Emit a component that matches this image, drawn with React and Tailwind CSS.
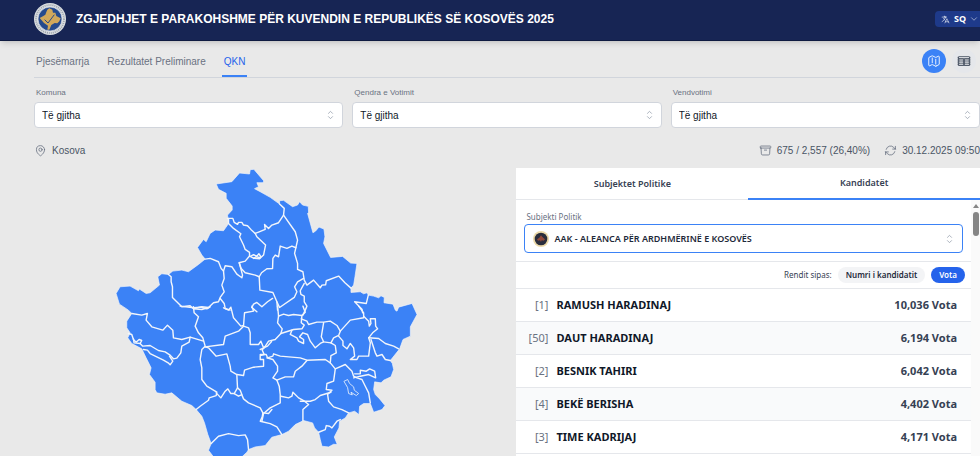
import { useState } from 'react';
import {
  HiOutlineArchiveBox,
  HiOutlineArrowPath,
  HiOutlineChevronDown,
  HiOutlineChevronUpDown,
  HiOutlineLanguage,
  HiOutlineMap,
  HiOutlineMapPin,
  HiOutlineTableCells
} from 'react-icons/hi2';

const tabs = ['Pjesëmarrja', 'Rezultatet Preliminare', 'QKN'];

const filters = [
  { id: 'komuna', label: 'Komuna' },
  { id: 'qendra', label: 'Qendra e Votimit' },
  { id: 'vendvotimi', label: 'Vendvotimi' }
];

const candidates = [
  { number: 1, name: 'RAMUSH HARADINAJ', votes: '10,036' },
  { number: 50, name: 'DAUT HARADINAJ', votes: '6,194' },
  { number: 2, name: 'BESNIK TAHIRI', votes: '6,042' },
  { number: 4, name: 'BEKË BERISHA', votes: '4,402' },
  { number: 3, name: 'TIME KADRIJAJ', votes: '4,171' }
];

const countryOutline =
  'M318 72 L365 65 388 39 418 42 420 29 431 28 461 63 458 68 440 68 445 80 433 86 450 95 480 112 508 132 508 122 520 121 547 140 562 135 568 125 577 135 594 139 595 157 592 160 608 218 616 213 626 201 641 207 644 230 640 250 661 292 697 289 721 309 740 310 734 350 730 375 722 384 722 397 750 395 760 401 770 398 774 405 790 408 805 413 812 407 822 412 821 428 848 432 855 450 860 453 865 441 905 430 920 463 900 500 900 528 878 538 868 566 840 601 846 610 850 628 842 650 820 660 812 668 793 665 790 688 795 703 808 716 824 736 815 748 790 756 780 730 760 730 748 738 746 763 733 753 715 758 705 773 688 783 686 803 672 830 681 853 670 852 655 860 635 858 630 838 625 816 613 803 607 788 580 781 555 793 535 813 515 823 485 831 465 856 435 860 415 868 410 876 395 890 310 890 295 870 303 850 293 823 283 788 275 768 258 748 245 736 215 723 185 698 165 702 140 698 135 688 135 666 118 643 123 623 108 593 95 566 65 550 53 533 60 518 50 503 50 483 65 460 55 450 28 432 18 400 30 380 60 378 85 392 88 387 108 400 120 398 148 375 143 350 155 341 175 343 188 333 215 330 235 335 265 313 285 297 275 285 262 262 280 238 288 245 300 220 315 210 340 212 352 195 355 190 352 165 366 150 366 138 348 115 348 100 325 88Z';

const northBorders = [
  'M352 175 368 175 372 187 382 193 385 187 395 187 400 195 412 197 422 208 435 220 445 216 465 208 463 193 475 205 485 195 505 188 520 165 522 145 508 132',
  'M355 175 355 190 370 205 392 221 388 230 400 255 405 268 418 277 418 288 432 295 448 296 460 285 466 255 440 230 435 220',
  'M422 288 430 284 440 288 446 281 452 290 M430 295 438 290 450 293',
  'M418 288 405 303 387 308 393 325 405 338 435 345 447 350',
  'M285 297 300 295 325 305 333 325 340 333 345 317 365 320 380 342 395 353 397 345 393 330 387 308',
  'M340 333 342 355 335 375 342 395 330 412 325 425 310 428 295 442 275 440 250 446 240 437 215 440 187 412 187 380 183 365 183 350 175 343',
  'M330 415 342 430 345 445 360 450',
  'M447 350 454 338 470 326 487 325 488 295 495 285 505 290 510 258 530 265 545 258 557 263',
  'M447 350 449 390 488 397 500 425 508 442 552 412 560 395 553 380 562 365 580 355',
  'M425 442 430 432 440 427 455 440 472 425 487 415',
  'M520 165 555 215 562 240 553 280 562 310 562 328 578 335 582 360 590 375 610 360 630 383 635 375 646 374 648 362 685 348 704 368 722 384',
  'M582 370 570 392 572 403 582 408 582 425 590 438 585 450 578 465',
  'M774 405 768 430 733 425 755 447 757 458',
  'M500 425 502 450',
  'M425 442 440 455',
  'M250 446 275 448 295 442'
];

const southWestBorders = [
  'M65 22 95 27 112 22 108 42 125 62 158 72 172 57 188 72 190 95 215 100 240 93 280 105',
  'M240 93 237 108 215 120 212 140 200 156 190 158 180 147 165 137 145 133 120 118 98 120 90 112 95 103 87 100 78 108 70 100 65 85 55 82',
  'M70 98 72 110 90 112',
  'M100 130 112 132 120 142 160 162 174 170 180 176 188 165 178 150',
  'M250 2 252 20 265 32 255 60 265 80 278 95 285 120 275 130 270 160 275 185 275 220 290 240 320 258 318 268 297 275 295 282 270 300 258 310',
  'M285 122 340 115 345 90 385 75 400 60 415 65 420 80 420 115 445 115 452 105 460 125 472 120 484 106',
  'M285 122 295 125 318 150 350 143 360 180 362 195 380 205 400 208 403 192 430 183 460 180 460 160 450 160 450 148 462 145 456 132 462 122',
  'M210 0 250 5 270 3 290 8 300 2',
  'M340 5 355 12 362 3 370 35 392 60 400 58 403 20 430 15 425 0',
  'M380 208 382 245 372 262 362 262 353 248 345 255 332 275 318 260',
  'M372 262 385 270 395 265 390 252 382 245',
  'M395 266 400 278 415 290 450 305 458 320 475 322 485 310',
  'M458 320 456 332 450 345 480 352 500 362 515 385',
  'M303 412 325 390 355 382 385 388 405 386 412 400 415 430'
];

const southEastBorders = [
  'M52 0 55 30 52 50 66 68 62 82 45 100 25 105 12 125 0 130',
  'M55 30 70 24 85 28 100 25 125 28 135 18 128 0',
  'M125 28 123 50 132 57 125 68 100 70 62 82',
  'M123 38 140 45 145 55 170 48 190 48 210 45 230 58 240 75 235 88 220 95 212 110 190 107 183 92 190 50',
  'M95 72 90 85 110 95 115 105 130 112 130 100 118 92 128 80 142 85 150 105 165 125 180 112 190 107',
  'M212 110 225 118 228 140 212 148 210 170',
  'M240 75 270 42 310 35 310 20 295 0',
  'M310 30 325 45 327 60 332 52 330 38 345 38 346 60 352 68 337 80 325 95 330 110 325 150 295 150 290 160 270 160 283 150 280 125 270 112 260 128 248 118 248 105 235 90',
  'M325 95 355 97 375 112 400 120 415 128',
  'M332 100 345 140 350 150 365 145 375 160 390 163',
  'M0 145 18 145 22 155 38 150 40 143 60 150 120 155 140 162 195 160 210 170 225 188 220 225 200 232 198 250 215 252 202 265 205 285 220 302 245 310 265 320',
  'M20 155 38 160 52 180 52 195 38 215 50 222 57 240 60 265 60 290 30 305 10 322 5 345',
  'M50 222 75 212 100 212 105 195 125 180 140 163',
  'M62 270 85 275 95 270 98 258 115 275 130 283 145 295 128 310 128 343',
  'M120 285 150 285 165 280 180 268 212 258',
  'M225 188 255 175 275 195 280 210 290 215 305 220 315 240 325 260 330 290',
  'M283 203 300 203 300 192 318 195 328 188 343 195 346 215 325 205 300 210 280 215',
  'M175 378 195 370 198 358 208 360 215 365 230 345 240 340'
];

// lake-like enclave in the south-east
const enclave = 'M252 225 262 220 268 232 280 242 282 252 295 262 288 268 272 258 276 266 265 262 262 245Z';

function KosovoMap() {
  return (
    <svg viewBox="-228 24 1446 864" className="block w-full" role="img" aria-label="Harta e Kosovës">
      <path d={countryOutline} fill="#3b82f6" stroke="#f1f5fb" strokeWidth="2" strokeLinejoin="round" />
      <g fill="none" stroke="#f3f6fb" strokeWidth="4.2" strokeLinejoin="round" strokeLinecap="round">
        {northBorders.map((d) => (
          <path key={d} d={d} />
        ))}
        <g transform="translate(0 438)">
          {southWestBorders.map((d) => (
            <path key={d} d={d} />
          ))}
        </g>
        <g transform="translate(450 438)">
          {southEastBorders.map((d) => (
            <path key={d} d={d} />
          ))}
          <path d={enclave} strokeWidth="2.4" />
        </g>
      </g>
    </svg>
  );
}

function Emblem() {
  return (
    <svg viewBox="0 0 96 96" className="size-8 shrink-0" aria-hidden="true">
      <circle cx="48" cy="48" r="48" fill="#d9dde0" />
      <circle cx="48" cy="48" r="42" fill="none" stroke="#9aa2ab" strokeWidth="5" strokeDasharray="3 3" />
      <circle cx="48" cy="48" r="36" fill="#254a8d" stroke="#e5e7eb" strokeWidth="2" />
      <path
        d="M37 27 L40 20 46 16 55 20 57 29 64 29 67 39 80 46 76 55 70 61 62 60 52 66 46 80 40 80 42 68 30 60 17 45 28 39 34 35Z"
        fill="#d1a85b"
      />
      <path d="M32 50 L42 60 61 35" fill="none" stroke="#254a8d" strokeWidth="3" />
    </svg>
  );
}

function PartyLogo() {
  return (
    <svg viewBox="0 0 48 48" className="size-4" aria-hidden="true">
      <circle cx="24" cy="24" r="24" fill="#ecd9a8" />
      <circle cx="24" cy="24" r="19" fill="#2a2e3d" />
      <path d="M24 13 L29 19 36 25 32 29 26 28 24 33 21 28 15 29 12 25 19 20Z" fill="#934a3b" />
    </svg>
  );
}

function Header() {
  return (
    <header className="flex h-[41px] shrink-0 items-center justify-between border-b border-[#0e1a40] bg-[#172554] pb-0.5 pl-[34px] shadow-md">
      <div className="flex items-center gap-2.5">
        <Emblem />
        <h1 className="text-[12px] font-bold whitespace-nowrap text-white">
          ZGJEDHJET E PARAKOHSHME PËR KUVENDIN E REPUBLIKËS SË KOSOVËS 2025
        </h1>
      </div>
      <button
        type="button"
        className="-mr-1 flex h-4 items-center gap-1 rounded bg-[#1e3a8a] px-1.5 font-['Noto_Sans',sans-serif] text-[9px] font-bold text-white"
      >
        <HiOutlineLanguage size={9} />
        SQ
        <HiOutlineChevronDown size={8} />
      </button>
    </header>
  );
}

function Filter({ id, label }) {
  return (
    <div className="min-w-0 flex-1">
      <label htmlFor={id} className="block px-0.5 text-[8px] leading-[18px] text-gray-500">
        {label}
      </label>
      <div className="relative">
        <select
          id={id}
          className="block h-[26px] w-full appearance-none rounded border border-gray-300 bg-white px-[7px] text-[10px] text-gray-900"
        >
          <option>Të gjitha</option>
        </select>
        <HiOutlineChevronUpDown
          size={13}
          className="pointer-events-none absolute top-1/2 right-1.5 -translate-y-1/2 text-gray-400"
        />
      </div>
    </div>
  );
}

function CandidatePanel() {
  const [sort, setSort] = useState('votes');

  return (
    <section className="flex min-w-0 flex-col bg-white font-['Noto_Sans',sans-serif]">
      <div className="flex h-8 shrink-0 text-[9px] font-semibold text-gray-700">
        <button type="button" className="flex-1 border-b border-gray-200">
          Subjektet Politike
        </button>
        <button type="button" className="flex-1 border-b-2 border-[#3b82f6]">
          Kandidatët
        </button>
      </div>

      <div className="flex min-h-0 flex-1">
        <div className="min-w-0 flex-1">
          <div className="border-b border-gray-200 px-2 pt-2.5 pb-2">
            <label htmlFor="party" className="block px-0.5 text-[8px] leading-[14px] text-gray-500">
              Subjekti Politik
            </label>
            <div className="relative">
              <select
                id="party"
                className="block h-[29px] w-full appearance-none rounded border border-[#3b82f6] bg-white pr-6 pl-[29px] text-[9px] font-semibold text-gray-800"
              >
                <option>AAK - ALEANCA PËR ARDHMËRINË E KOSOVËS</option>
              </select>
              <span className="pointer-events-none absolute top-1/2 left-[9px] -translate-y-1/2">
                <PartyLogo />
              </span>
              <HiOutlineChevronUpDown
                size={13}
                className="pointer-events-none absolute top-1/2 right-[7px] -translate-y-1/2 text-gray-400"
              />
            </div>
          </div>

          <div className="flex h-[27px] items-center justify-end gap-1.5 border-b border-gray-200 pr-1.5 text-[8px] font-semibold text-gray-800">
            <span className="font-normal text-gray-700">Rendit sipas:</span>
            <button
              type="button"
              className="h-4 rounded-full bg-gray-100 px-2"
              aria-pressed={sort === 'number'}
              onClick={() => setSort('number')}
            >
              Numri i kandidatit
            </button>
            <button
              type="button"
              className="h-4 rounded-full bg-[#2563eb] px-2 text-white"
              aria-pressed={sort === 'votes'}
              onClick={() => setSort('votes')}
            >
              Vota
            </button>
          </div>

          <ul>
            {candidates.map((candidate) => (
              <li
                key={candidate.number}
                className="flex h-[33px] items-center gap-2 border-b border-gray-200 pt-px pr-3.5 pl-3 text-[11px] font-bold even:bg-gray-50"
              >
                <span className="w-5 text-right font-normal text-gray-500">[{candidate.number}]</span>
                <span className="flex-1 text-gray-900">{candidate.name}</span>
                <span className="text-gray-700">{candidate.votes} Vota</span>
              </li>
            ))}
          </ul>
        </div>

        <div className="flex w-[9px] shrink-0 flex-col items-center bg-[#fafafa] pt-1" aria-hidden="true">
          <svg viewBox="0 0 6 4" className="h-1 w-1.5">
            <path d="M3 0 L6 4 H0Z" fill="#858585" />
          </svg>
          <div className="mt-1 h-6 w-1.5 rounded-full bg-[#858585]" />
        </div>
      </div>
    </section>
  );
}

function App() {
  const [activeTab, setActiveTab] = useState('QKN');

  return (
    <div className="flex h-screen flex-col overflow-hidden bg-[#e9e9e9] font-['Liberation_Sans',Arial,sans-serif]">
      <Header />

      <main className="flex min-h-0 flex-1 flex-col pl-[34px]">
        <div className="flex h-[37px] shrink-0 items-stretch justify-between border-b border-gray-300">
          <nav className="flex gap-3.5 text-[10px]">
            {tabs.map((tab) => (
              <button
                key={tab}
                type="button"
                onClick={() => setActiveTab(tab)}
                className={
                  tab === activeTab
                    ? 'border-b-2 border-[#3b82f6] px-0.5 pt-1.5 text-[#2563eb]'
                    : 'border-b-2 border-transparent px-0.5 pt-1.5 text-gray-500'
                }
              >
                {tab}
              </button>
            ))}
          </nav>
          <div className="flex items-center gap-1.5 pt-1 pr-1">
            <button
              type="button"
              aria-label="Harta"
              className="flex size-6 items-center justify-center rounded-full bg-[#3b82f6] text-white"
            >
              <HiOutlineMap size={14} />
            </button>
            <button
              type="button"
              aria-label="Tabela"
              className="flex size-6 items-center justify-center rounded-full bg-[#e5e7eb] text-gray-600"
            >
              <HiOutlineTableCells size={14} />
            </button>
          </div>
        </div>

        <div className="flex shrink-0 gap-[9px] pt-1.5">
          {filters.map((filter) => (
            <Filter key={filter.id} {...filter} />
          ))}
        </div>

        <div className="flex h-10 shrink-0 items-center justify-between pt-1 text-[10px] text-gray-600">
          <p className="flex items-center gap-[5px]">
            <HiOutlineMapPin size={13} className="text-gray-500" />
            Kosova
          </p>
          <div className="flex gap-3.5">
            <p className="flex items-center gap-[5px]">
              <HiOutlineArchiveBox size={13} className="text-gray-500" />
              675 / 2,557 (26,40%)
            </p>
            <p className="flex items-center gap-[5px]">
              <HiOutlineArrowPath size={13} className="text-gray-500" />
              30.12.2025 09:50
            </p>
          </div>
        </div>

        <div className="grid min-h-0 flex-1 grid-cols-[51fr_49fr]">
          <KosovoMap />
          <CandidatePanel />
        </div>
      </main>
    </div>
  );
}

export default App;
